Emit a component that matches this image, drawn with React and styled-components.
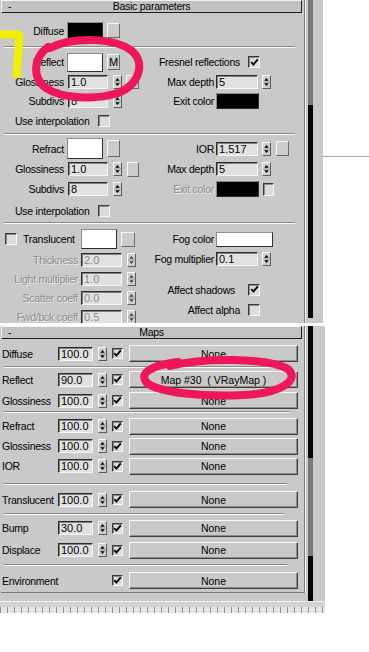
import React from "react";
import styled, { createGlobalStyle } from "styled-components";

const GlobalStyle = createGlobalStyle`
  html, body {
    margin: 0;
    padding: 0;
    background: #fff;
  }
  body {
    font-family: "Liberation Sans", Arial, sans-serif;
  }
`;

const Page = styled.div`
  position: relative;
  width: 369px;
  height: 652px;
  background: #fff;
  font-size: 10.5px;
  letter-spacing: -0.25px;
  color: #000;
`;

const TopRow = styled.div`
  display: flex;
`;

const Aside = styled.div`
  flex: 1;
  padding-top: 156px;
`;

const GuideLine = styled.div`
  border-top: 1px solid #a6a6a6;
`;

const Gap = styled.div`
  height: 3px;
`;

const Panel = styled.div`
  width: ${p => p.$w}px;
  height: ${p => p.$h}px;
  background: #c9c9c9;
  display: flex;
  flex-direction: column;
  overflow: hidden;
`;

const PanelBody = styled.div`
  display: flex;
  flex: 1;
  min-height: 0;
`;

const Rollout = styled.div`
  margin-left: 1px;
  width: 303px;
  align-self: flex-start;
  border-right: 1px solid #7c7c7c;
  box-shadow: 1px 0 0 #f4f4f4;
  ${p => p.$closed && "border-bottom: 1px solid #7c7c7c;"}
`;

const Track = styled.div`
  margin-left: 3px;
  width: 5px;
  display: flex;
  flex-direction: column;
`;

const Thumb = styled.div`
  height: ${p => p.$h}px;
  flex: none;
  background: ${p => (p.$dark ? "#060606" : "#7a7a7a")};
`;

const StatusBand = styled.div`
  height: 5px;
  border-top: 1px solid #f2f2f2;
  background: #d2d2d2;
`;

const Ruler = styled.div`
  height: 6px;
  background: repeating-linear-gradient(90deg, #8e8e8e 0 1px, #e6e6e6 1px 7px);
`;

const Header = styled.div`
  height: 11px;
  margin-right: 2px;
  border: 1px solid;
  border-color: #f4f4f4 #1e1e1e #1e1e1e #f4f4f4;
  background: #c2c2c2;
  display: grid;
  grid-template-columns: 16px 1fr 16px;
  align-items: center;
  line-height: 11px;
  font-size: 10.5px;
`;

const Dash = styled.span`
  padding-left: 6px;
`;

const Title = styled.span`
  text-align: center;
`;

const Separator = styled.div`
  margin: 0 ${p => p.$mr ?? 9}px 0 3px;
  border-top: 1px solid #8a8a8a;
  border-bottom: 1px solid #fbfbfb;
`;

const Section = styled.div`
  display: flex;
  padding: ${p => p.$pt}px 0 ${p => p.$pb}px;
`;

const Col = styled.div`
  display: flex;
  flex-direction: column;
  width: ${p => (p.$w ? `${p.$w}px` : "auto")};
  flex: ${p => (p.$w ? "none" : 1)};
`;

const Row = styled.div`
  display: flex;
  align-items: center;
  height: ${p => p.$h}px;
  margin-top: ${p => p.$mt || 0}px;
  padding-left: ${p => p.$pl || 0}px;
`;

const Label = styled.span`
  width: ${p => p.$w}px;
  flex: none;
  margin-left: ${p => p.$ml || 0}px;
  margin-right: ${p => p.$mr ?? 3}px;
  text-align: ${p => (p.$left ? "left" : "right")};
  white-space: nowrap;
  color: ${p => (p.$off ? "#8b8b8b" : "#000")};
  ${p => p.$off && "text-shadow: 1px 1px 0 #ededed;"}
`;

const Field = styled.div`
  width: ${p => p.$w}px;
  height: 14px;
  box-sizing: border-box;
  flex: none;
  border: 1px solid;
  border-color: #2c2c2c #f6f6f6 #f6f6f6 #2c2c2c;
  box-shadow: inset 1px 1px 0 #808080;
  background: #e1e1e1;
  padding-left: 2px;
  line-height: 12px;
  font-size: 11px;
  letter-spacing: 0;
  color: ${p => (p.$off ? "#8b8b8b" : "#000")};
`;

const Swatch = styled.div`
  width: ${p => p.$w}px;
  height: ${p => p.$h}px;
  box-sizing: border-box;
  flex: none;
  background: ${p => p.$c};
  border: 1px solid;
  border-color: #8c8c8c #2e2e2e #2e2e2e #8c8c8c;
`;

const SmallBtn = styled.div`
  width: ${p => p.$w ?? 13}px;
  height: ${p => p.$h ?? 15}px;
  box-sizing: border-box;
  flex: none;
  margin-left: ${p => p.$ml ?? 4}px;
  background: #cbcbcb;
  border: 1px solid;
  border-color: #f8f8f8 #6a6a6a #6a6a6a #f8f8f8;
  display: flex;
  align-items: center;
  justify-content: center;
  font-size: 11px;
  letter-spacing: 0;
`;

const SpinBox = styled.div`
  margin-left: ${p => p.$ml ?? 5}px;
  width: 9px;
  height: 14px;
  box-sizing: border-box;
  flex: none;
  border: 1px solid;
  border-color: #f8f8f8 #5c5c5c #5c5c5c #f8f8f8;
  background: #cfcfcf;
  display: flex;
`;

const Box = styled.div`
  width: ${p => p.$w ?? 12}px;
  height: ${p => p.$h ?? 12}px;
  box-sizing: border-box;
  flex: none;
  margin-left: ${p => p.$ml || 0}px;
  border: 1px solid;
  border-color: #3a3a3a #f8f8f8 #f8f8f8 #3a3a3a;
  box-shadow: inset 1px 1px 0 #8a8a8a;
  background: #dcdcdc;
  display: flex;
  align-items: center;
  justify-content: center;
`;

const MapBtn = styled.div`
  width: 169px;
  height: 17px;
  box-sizing: border-box;
  flex: none;
  margin-left: 6px;
  background: #c9c9c9;
  border: 1px solid;
  border-color: #fafafa #3e3e3e #3e3e3e #fafafa;
  box-shadow: inset -1px -1px 0 #8e8e8e;
  display: flex;
  align-items: center;
  justify-content: center;
  white-space: pre;
  letter-spacing: 0;
`;

const Overlay = styled.svg`
  position: absolute;
  left: 0;
  top: 0;
  pointer-events: none;
`;

const Spinner = ({ ml, off }) => (
  <SpinBox $ml={ml}>
    <svg width="7" height="12" viewBox="0 0 7 12">
      <path d="M0 6H7" stroke="#8a8a8a" strokeWidth="0.8" />
      <path d="M3.5 2L5.7 4.8H1.3Z M1.3 7.2H5.7L3.5 10Z" fill={off ? "#444" : "#000"} />
    </svg>
  </SpinBox>
);

const CheckBox = ({ on, ml, w, h }) => (
  <Box $ml={ml} $w={w} $h={h}>
    {on && (
      <svg width="9" height="9" viewBox="0 0 9 9">
        <path d="M1.3 4.2L3.4 6.6L7.8 1.4" fill="none" stroke="#000" strokeWidth="1.9" />
      </svg>
    )}
  </Box>
);

const SpinField = ({ label, value, lw = 63, mr = 4, fw = 40, sml = 5, off }) => (
  <>
    <Label $w={lw} $mr={mr} $off={off}>{label}</Label>
    <Field $w={fw} $off={off}>{value}</Field>
    <Spinner ml={sml} off={off} />
  </>
);

const MapRow = ({ label, value, map = "None", noAmount, h = 21 }) => (
  <Row $h={h} $pl={1}>
    {noAmount ? (
      <Label $w={110} $mr={0} $left>{label}</Label>
    ) : (
      <>
        <Label $w={56} $mr={0} $left>{label}</Label>
        <Field $w={35}>{value}</Field>
        <Spinner ml={5} />
      </>
    )}
    <CheckBox on ml={noAmount ? 0 : 5} w={11} h={11} />
    <MapBtn>{map}</MapBtn>
  </Row>
);

const BasicParameters = () => (
  <Panel $w={323} $h={323}>
    <PanelBody>
      <Rollout>
        <Header>
          <Dash>-</Dash>
          <Title>Basic parameters</Title>
        </Header>

        <Section $pt={8} $pb={6}>
          <Col $w={150}>
            <Row $h={19}>
              <Label $w={63}>Diffuse</Label>
              <Swatch $w={36} $h={18} $c="#000" />
              <SmallBtn />
            </Row>
          </Col>
        </Section>
        <Separator />

        <Section $pt={4} $pb={3}>
          <Col $w={150}>
            <Row $h={20}>
              <Label $w={63}>Reflect</Label>
              <Swatch $w={36} $h={19} $c="#fff" />
              <SmallBtn $h={16}>M</SmallBtn>
            </Row>
            <Row $h={19}>
              <SpinField label="Glossiness" value="1.0" />
              <SmallBtn $h={14} />
            </Row>
            <Row $h={20}>
              <SpinField label="Subdivs" value="8" />
            </Row>
            <Row $h={19} $pl={14}>
              <Label $w={83} $mr={0} $left>Use interpolation</Label>
              <CheckBox />
            </Row>
          </Col>
          <Col>
            <Row $h={20}>
              <Label $w={89} $mr={8}>Fresnel reflections</Label>
              <CheckBox on />
            </Row>
            <Row $h={19}>
              <SpinField label="Max depth" value="5" mr={2} fw={42} sml={4} />
            </Row>
            <Row $h={20}>
              <Label $w={63} $mr={2}>Exit color</Label>
              <Swatch $w={43} $h={16} $c="#000" />
            </Row>
          </Col>
        </Section>
        <Separator />

        <Section $pt={3} $pb={0}>
          <Col $w={150}>
            <Row $h={21}>
              <Label $w={63}>Refract</Label>
              <Swatch $w={36} $h={21} $c="#fff" />
              <SmallBtn $h={17} />
            </Row>
            <Row $h={20}>
              <SpinField label="Glossiness" value="1.0" />
              <SmallBtn $ml={5} $w={12} $h={15} />
            </Row>
            <Row $h={20}>
              <SpinField label="Subdivs" value="8" />
            </Row>
            <Row $h={23} $pl={14}>
              <Label $w={83} $mr={0} $left>Use interpolation</Label>
              <CheckBox />
            </Row>
          </Col>
          <Col>
            <Row $h={21}>
              <SpinField label="IOR" value="1.517" mr={2} fw={42} sml={4} />
              <SmallBtn $ml={5} $h={15} />
            </Row>
            <Row $h={20}>
              <SpinField label="Max depth" value="5" mr={2} fw={42} sml={4} />
            </Row>
            <Row $h={20}>
              <Label $w={63} $mr={2} $off>Exit color</Label>
              <Swatch $w={43} $h={16} $c="#000" />
              <CheckBox ml={4} w={11} h={13} />
            </Row>
          </Col>
        </Section>
        <Separator />

        <Section $pt={4} $pb={0}>
          <Col $w={150}>
            <Row $h={22} $pl={4}>
              <CheckBox />
              <Label $w={58} $ml={6} $mr={0} $left>Translucent</Label>
              <Swatch $w={36} $h={20} $c="#fff" />
              <SmallBtn $w={14} />
            </Row>
            <Row $h={19}>
              <SpinField label="Thickness" value="2.0" lw={77} mr={3} fw={41} off />
            </Row>
            <Row $h={19}>
              <SpinField label="Light multiplier" value="1.0" lw={77} mr={3} fw={41} off />
            </Row>
            <Row $h={19}>
              <SpinField label="Scatter coeff" value="0.0" lw={77} mr={3} fw={41} off />
            </Row>
            <Row $h={19}>
              <SpinField label="Fwd/bck coeff" value="0.5" lw={77} mr={3} fw={41} off />
            </Row>
          </Col>
          <Col>
            <Row $h={22}>
              <Label $w={63} $mr={2}>Fog color</Label>
              <Swatch $w={57} $h={15} $c="#fff" />
            </Row>
            <Row $h={18}>
              <SpinField label="Fog multiplier" value="0.1" mr={2} fw={42} sml={4} />
            </Row>
            <Row $h={19} $mt={12}>
              <Label $w={84} $mr={13}>Affect shadows</Label>
              <CheckBox on />
            </Row>
            <Row $h={21}>
              <Label $w={89} $mr={8}>Affect alpha</Label>
              <CheckBox />
            </Row>
          </Col>
        </Section>
      </Rollout>
      <Track>
        <Thumb $h={105} />
        <Thumb $h={213} $dark />
      </Track>
    </PanelBody>
  </Panel>
);

const Maps = () => (
  <Panel $w={325} $h={287}>
    <PanelBody>
      <Rollout $closed>
        <Header>
          <Dash>-</Dash>
          <Title>Maps</Title>
        </Header>

        <Section $pt={4} $pb={2}>
          <Col>
            <MapRow label="Diffuse" value="100.0" />
          </Col>
        </Section>
        <Separator $mr={14} />

        <Section $pt={1} $pb={0}>
          <Col>
            <MapRow label="Reflect" value="90.0" map="Map #30  ( VRayMap )" />
            <MapRow label="Glossiness" value="100.0" />
          </Col>
        </Section>
        <Separator $mr={14} />

        <Section $pt={3} $pb={7}>
          <Col>
            <MapRow label="Refract" value="100.0" h={20} />
            <MapRow label="Glossiness" value="100.0" h={20} />
            <MapRow label="IOR" value="100.0" h={20} />
          </Col>
        </Section>
        <Separator $mr={17} />

        <Section $pt={4} $pb={3}>
          <Col>
            <MapRow label="Translucent" value="100.0" />
          </Col>
        </Section>
        <Separator $mr={20} />

        <Section $pt={2} $pb={3}>
          <Col>
            <MapRow label="Bump" value="30.0" h={22} />
            <MapRow label="Displace" value="100.0" h={22} />
          </Col>
        </Section>
        <Separator $mr={17} />

        <Section $pt={4} $pb={1}>
          <Col>
            <MapRow label="Environment" noAmount />
          </Col>
        </Section>
      </Rollout>
      <Track>
        <Thumb $h={132} $dark />
        <Thumb $h={98} />
        <Thumb $h={46} $dark />
      </Track>
    </PanelBody>
    <StatusBand />
    <Ruler />
  </Panel>
);

export default function App() {
  return (
    <Page>
      <GlobalStyle />
      <TopRow>
        <BasicParameters />
        <Aside>
          <GuideLine />
        </Aside>
      </TopRow>
      <Gap />
      <Maps />
      <Overlay width="369" height="652" viewBox="0 0 369 652">
        <path
          d="M0 34.5H21M19.5 33L16.5 78"
          fill="none"
          stroke="#f2f000"
          strokeWidth="8"
        />
        <path
          d="M50 48C72 37 114 37 132 51C146 63 139 85 118 93C96 100 62 99 46 88C32 78 33 58 48 47"
          fill="none"
          stroke="#f0165a"
          strokeWidth="8"
          strokeLinecap="round"
        />
        <path
          d="M170 366C205 357 268 358 288 369C300 380 282 393 244 395C204 397 160 393 147 383C139 374 148 366 178 362"
          fill="none"
          stroke="#f0165a"
          strokeWidth="8"
          strokeLinecap="round"
        />
      </Overlay>
    </Page>
  );
}
